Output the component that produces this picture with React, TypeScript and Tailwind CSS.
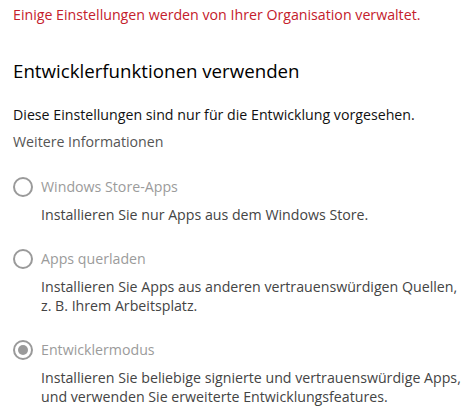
import React from "react";

const font = { fontFamily: '"Open Sans", "Noto Sans", sans-serif' };

function Radio({ checked }: { checked?: boolean }) {
  return (
    <span className="flex h-[20px] w-[20px] shrink-0 items-center justify-center rounded-full border-2 border-[#9a9a9a]">
      {checked && <span className="h-[10px] w-[10px] rounded-full bg-[#9a9a9a]" />}
    </span>
  );
}

function Option({ label, desc, checked }: { label: string; desc: React.ReactNode; checked?: boolean }) {
  return (
    <div className="flex flex-col">
      <div className="flex items-center gap-[8px]">
        <Radio checked={checked} />
        <span className="text-[14.2px] leading-[20px] text-[#9b9b9b]">{label}</span>
      </div>
      <div className="mt-[8px] pl-[28px] text-[14.2px] leading-[19px] text-[#444]">{desc}</div>
    </div>
  );
}

export default function App() {
  return (
    <div className="h-[416px] w-[467px] overflow-hidden bg-white pl-[13px] pt-[5px]" style={font}>
      <div className="text-[14.2px] leading-[20px] text-[#c4202b]">
        Einige Einstellungen werden von Ihrer Organisation verwaltet.
      </div>
      <div className="mt-[33px] text-[18.7px] leading-[26px] text-black">Entwicklerfunktionen verwenden</div>
      <div className="mt-[21px] text-[14.2px] leading-[20px] text-[#111]">
        Diese Einstellungen sind nur für die Entwicklung vorgesehen.
      </div>
      <div className="mt-[7px] text-[14.2px] leading-[20px] text-[#555]">Weitere Informationen</div>
      <div className="mt-[25px] flex flex-col gap-[25px]">
        <Option label="Windows Store-Apps" desc="Installieren Sie nur Apps aus dem Windows Store." />
        <Option
          label="Apps querladen"
          desc={
            <>
              Installieren Sie Apps aus anderen vertrauenswürdigen Quellen,
              <br />
              z. B. Ihrem Arbeitsplatz.
            </>
          }
        />
        <Option
          checked
          label="Entwicklermodus"
          desc={
            <>
              Installieren Sie beliebige signierte und vertrauenswürdige Apps,
              <br />
              und verwenden Sie erweiterte Entwicklungsfeatures.
            </>
          }
        />
      </div>
    </div>
  );
}
